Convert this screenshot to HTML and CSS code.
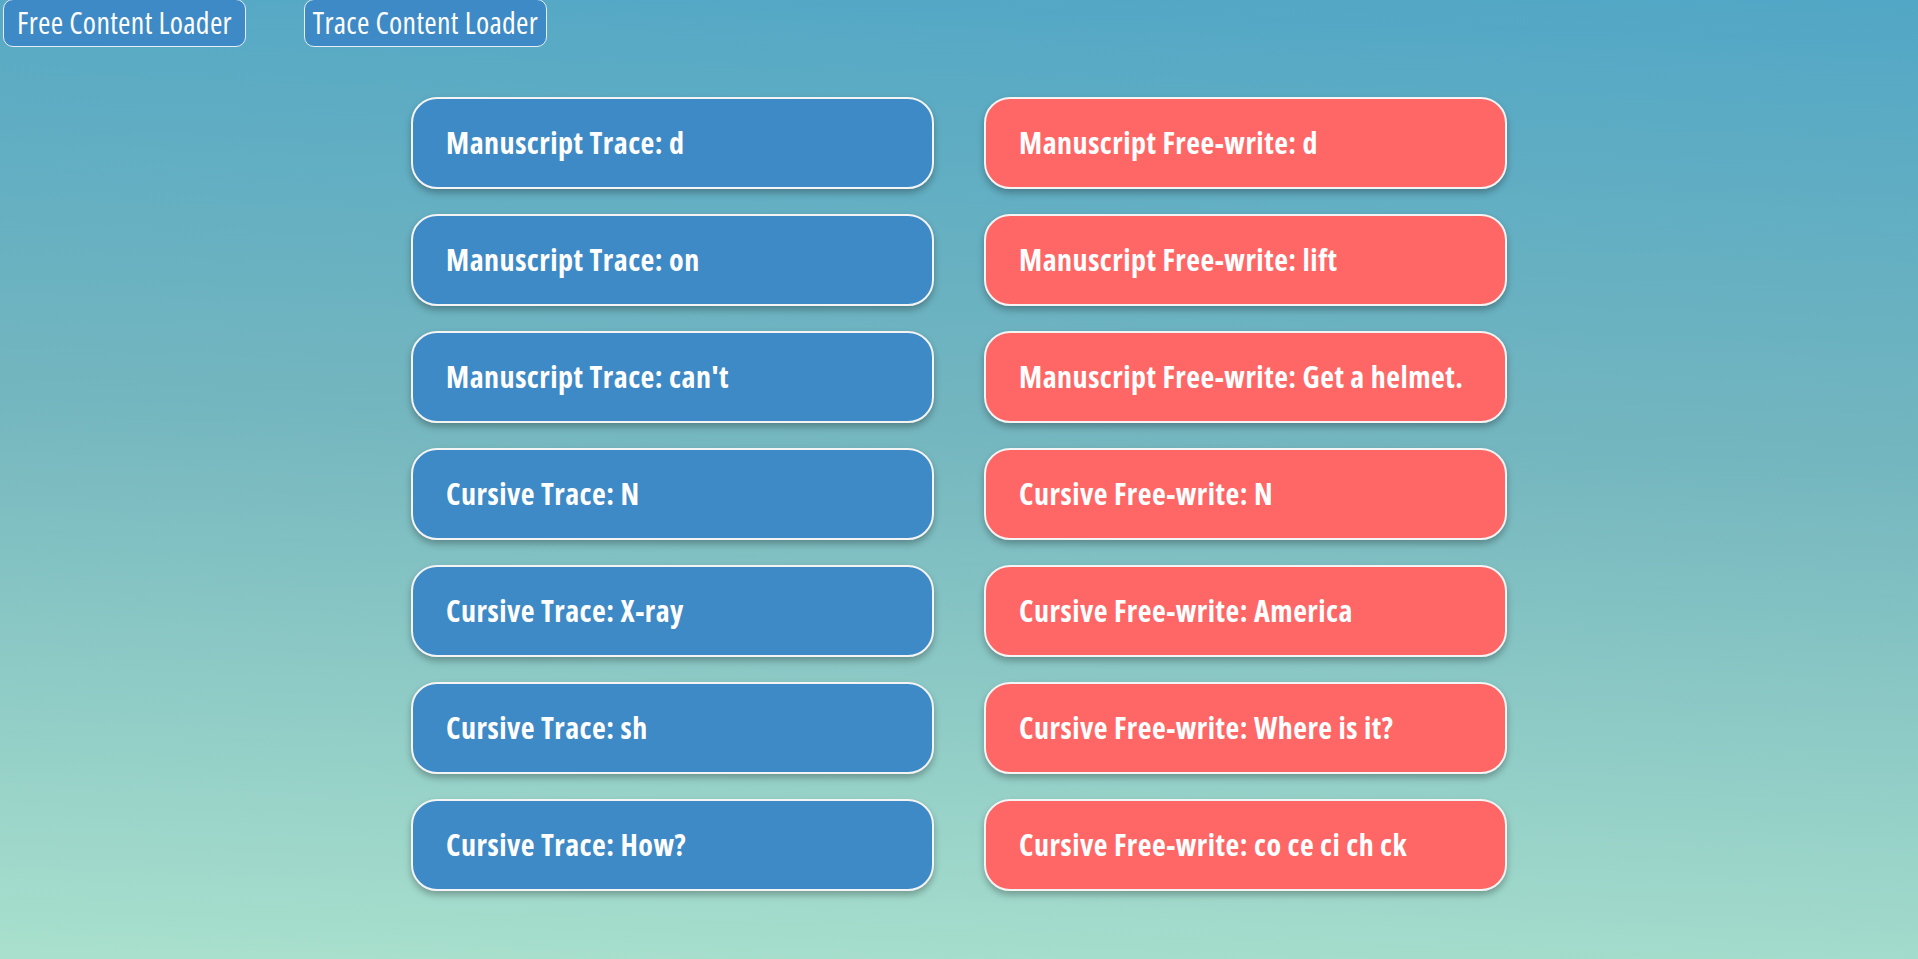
FILE: index.html
```html
<!DOCTYPE html>
<html lang="en">
<head>
    <meta charset="UTF-8">
    <meta name="viewport" content="width=device-width, initial-scale=1.0">
    <title>Content Loader</title>
    <link rel="stylesheet" href="styles.css">
</head>
<body>
    <div id="loaders">
        <button class="loader-button">Free Content Loader</button>
        <button class="loader-button">Trace Content Loader</button>
    </div>
    <div id="activities">
        <button class="activity trace">Manuscript Trace: d</button>
        <button class="activity free">Manuscript Free-write: d</button>
        <button class="activity trace">Manuscript Trace: on</button>
        <button class="activity free">Manuscript Free-write: lift</button>
        <button class="activity trace">Manuscript Trace: can't</button>
        <button class="activity free">Manuscript Free-write: Get a helmet.</button>
        <button class="activity trace">Cursive Trace: N</button>
        <button class="activity free">Cursive Free-write: N</button>
        <button class="activity trace">Cursive Trace: X-ray</button>
        <button class="activity free">Cursive Free-write: America</button>
        <button class="activity trace">Cursive Trace: sh</button>
        <button class="activity free">Cursive Free-write: Where is it?</button>
        <button class="activity trace">Cursive Trace: How?</button>
        <button class="activity free">Cursive Free-write: co ce ci ch ck</button>
    </div>
</body>
</html>
```

FILE: styles.css
```css
html {
    min-height: 100%;
}

body {
    margin: 0;
    min-height: 959px;
    font-family: "Open Sans", "DejaVu Sans Condensed", sans-serif;
    font-stretch: 75%;
    background: linear-gradient(182deg, #52a7c6 0%, #74b6bf 45%, #a9e0cd 100%);
}

#loaders {
    display: flex;
    gap: 58px;
    padding-left: 3px;
}

.loader-button {
    width: 243px;
    height: 48px;
    padding: 0 0 2px;
    font-family: inherit;
    font-stretch: 75%;
    font-size: 30px;
    letter-spacing: 0.3px;
    color: white;
    background-color: #3e8ac6;
    border: 1px solid #e6eef4;
    border-radius: 10px;
    margin-top: -1px;
}

#activities {
    display: grid;
    grid-template-columns: 523px 523px;
    column-gap: 50px;
    row-gap: 25px;
    justify-content: center;
    margin-top: 50px;
}

.activity {
    height: 92px;
    padding: 0 0 2px 33px;
    text-align: left;
    font-family: inherit;
    font-stretch: 75%;
    font-size: 30px;
    letter-spacing: 0.5px;
    font-weight: bold;
    color: white;
    border: 2px solid #f4f4f4;
    border-radius: 26px;
    box-shadow: 0 4px 7px rgba(0, 0, 0, 0.28);
}

.trace {
    background-color: #3e8ac6;
}

.free {
    background-color: #ff6666;
}
```
